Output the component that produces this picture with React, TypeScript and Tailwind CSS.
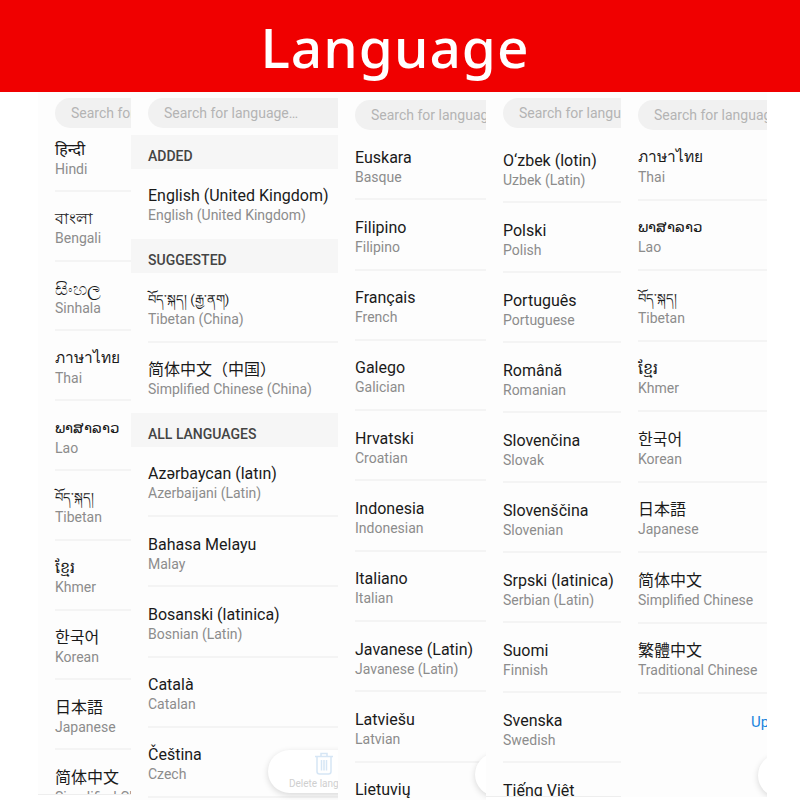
type Lang = [string, string, string?];

const font = "[font-family:Roboto,'Noto_Sans','DejaVu_Sans','Noto_Sans_CJK_JP',sans-serif]";

const col1: Lang[] = [
  ['हिन्दी', 'Hindi'],
  ['বাংলা', 'Bengali'],
  ['සිංහල', 'Sinhala', 'text-[18px]'],
  ['ภาษาไทย', 'Thai', 'text-[15.5px]'],
  ['ພາສາລາວ', 'Lao', 'text-[14.5px] font-light'],
  ['བོད་སྐད།', 'Tibetan', 'text-[13px]'],
  ['ខ្មែរ', 'Khmer'],
  ['한국어', 'Korean'],
  ['日本語', 'Japanese'],
  ['简体中文', 'Simplified Chinese'],
];

const all: Lang[] = [
  ['Azərbaycan (latın)', 'Azerbaijani (Latin)'],
  ['Bahasa Melayu', 'Malay'],
  ['Bosanski (latinica)', 'Bosnian (Latin)'],
  ['Català', 'Catalan'],
  ['Čeština', 'Czech'],
];

const col3: Lang[] = [
  ['Euskara', 'Basque'],
  ['Filipino', 'Filipino'],
  ['Français', 'French'],
  ['Galego', 'Galician'],
  ['Hrvatski', 'Croatian'],
  ['Indonesia', 'Indonesian'],
  ['Italiano', 'Italian'],
  ['Javanese (Latin)', 'Javanese (Latin)'],
  ['Latviešu', 'Latvian'],
  ['Lietuvių', 'Lithuanian'],
];

const col4: Lang[] = [
  ['O‘zbek (lotin)', 'Uzbek (Latin)'],
  ['Polski', 'Polish'],
  ['Português', 'Portuguese'],
  ['Română', 'Romanian'],
  ['Slovenčina', 'Slovak'],
  ['Slovenščina', 'Slovenian'],
  ['Srpski (latinica)', 'Serbian (Latin)'],
  ['Suomi', 'Finnish'],
  ['Svenska', 'Swedish'],
  ['Tiếng Việt', 'Vietnamese'],
];

const col5: Lang[] = [
  ['ภาษาไทย', 'Thai', 'text-[15.5px]'],
  ['ພາສາລາວ', 'Lao', 'text-[14.5px] font-light'],
  ['བོད་སྐད།', 'Tibetan', 'text-[13px]'],
  ['ខ្មែរ', 'Khmer'],
  ['한국어', 'Korean'],
  ['日本語', 'Japanese'],
  ['简体中文', 'Simplified Chinese'],
  ['繁體中文', 'Traditional Chinese'],
];

function Search() {
  return (
    <div className="h-[30px] ml-[17px] pl-[16px] pt-px rounded-l-full bg-[#f1f1f1] flex items-center text-[14px] text-[#b4b4b4] whitespace-nowrap overflow-hidden">
      Search for language…
    </div>
  );
}

function Row({ lang, height = 'h-[70.3px]', plain }: { lang: Lang; height?: string; plain?: boolean }) {
  return (
    <div className={`${height} ml-[17px] pt-[16.5px] whitespace-nowrap ${plain ? '' : 'border-b-2 border-[#f4f4f4]'}`}>
      <div className={`leading-[21px] text-[#1a1a1a] ${lang[2] ?? 'text-[16px]'}`}>{lang[0]}</div>
      <div className="text-[14px] leading-[18px] text-[#8c8c8c]">{lang[1]}</div>
    </div>
  );
}

function Band({ label, className = '' }: { label: string; className?: string }) {
  return (
    <div className={`h-[33.5px] pl-[17px] pt-[12px] bg-[#f6f6f6] text-[14px] leading-[18px] font-medium text-[#444444] ${className}`}>
      {label}
    </div>
  );
}

function Fab({ className }: { className: string }) {
  return (
    <div className={`absolute h-[43px] bg-white rounded-l-full shadow-[0_2px_6px_rgba(0,0,0,0.15)] ${className}`} />
  );
}

function TrashIcon() {
  return (
    <svg
      className="absolute left-[183px] top-[660px]"
      width="20"
      height="23"
      viewBox="0 0 20 23"
      fill="none"
      stroke="#d6e6f5"
      strokeWidth="1.5"
    >
      <path d="M1 4.5h18M7 4.5V1.5h6v3M3 4.5v15a2.5 2.5 0 0 0 2.5 2.5h9a2.5 2.5 0 0 0 2.5-2.5v-15M7.5 8v10.5M10 8v10.5M12.5 8v10.5" />
    </svg>
  );
}

export default function App() {
  return (
    <div className={`w-[800px] h-[800px] bg-white overflow-hidden ${font}`}>
      <div className="h-[92px] bg-[#f00000] flex items-center justify-center pr-[10px] text-white text-[55px] leading-none tracking-[1px] font-medium [font-family:'Noto_Sans',sans-serif]">
        Language
      </div>
      <div className="flex h-[708px] pl-[38px]">
        <div className="w-[93px] h-[703px] pt-[6px] bg-[#fdfdfd] overflow-hidden border-b border-[#eeeeee]">
          <Search />
          <div className="mt-[-6px]">
            {col1.map((l) => (
              <Row key={l[1]} lang={l} height="h-[69.8px]" />
            ))}
          </div>
        </div>

        <div className="relative w-[207px] pt-[6px] bg-[#fdfdfd] overflow-hidden">
          <Search />
          <Band label="ADDED" className="mt-[7px]" />
          <Row lang={['English (United Kingdom)', 'English (United Kingdom)']} height="h-[70.5px]" plain />
          <Band label="SUGGESTED" />
          <Row lang={['བོད་སྐད། (རྒྱ་ནག)', 'Tibetan (China)', 'text-[13px]']} />
          <Row lang={['简体中文（中国）', 'Simplified Chinese (China)']} height="h-[70.5px]" plain />
          <Band label="ALL LANGUAGES" />
          {all.map((l) => (
            <Row key={l[1]} lang={l} />
          ))}
          <Fab className="left-[137px] top-[658px] w-[80px]" />
          <TrashIcon />
          <div className="absolute left-[158px] top-[685px] text-[10px] leading-[14px] text-[#cfcfcf] whitespace-nowrap">
            Delete language
          </div>
        </div>

        <div className="relative w-[148px] pt-[8px] bg-[#fdfdfd] overflow-hidden">
          <Search />
          {col3.map((l) => (
            <Row key={l[1]} lang={l} />
          ))}
          <Fab className="left-[137px] top-[661px] w-[30px]" />
        </div>

        <div className="w-[135px] h-[705px] pt-[6px] bg-[#fdfdfd] overflow-hidden border-b border-[#eeeeee]">
          <Search />
          <div className="mt-[5px]">
            {col4.map((l) => (
              <Row key={l[1]} lang={l} height="h-[70px]" />
            ))}
          </div>
        </div>

        <div className="relative w-[146px] h-[705px] pt-[8px] bg-[#fdfdfd] overflow-hidden">
          <Search />
          {col5.map((l) => (
            <Row key={l[1]} lang={l} height="h-[70.5px]" />
          ))}
          <div className="absolute left-[130px] top-[621px] text-[15px] leading-[18px] text-[#1a85dd]">Update</div>
          <Fab className="left-[137px] top-[662px] w-[30px]" />
        </div>
      </div>
    </div>
  );
}
